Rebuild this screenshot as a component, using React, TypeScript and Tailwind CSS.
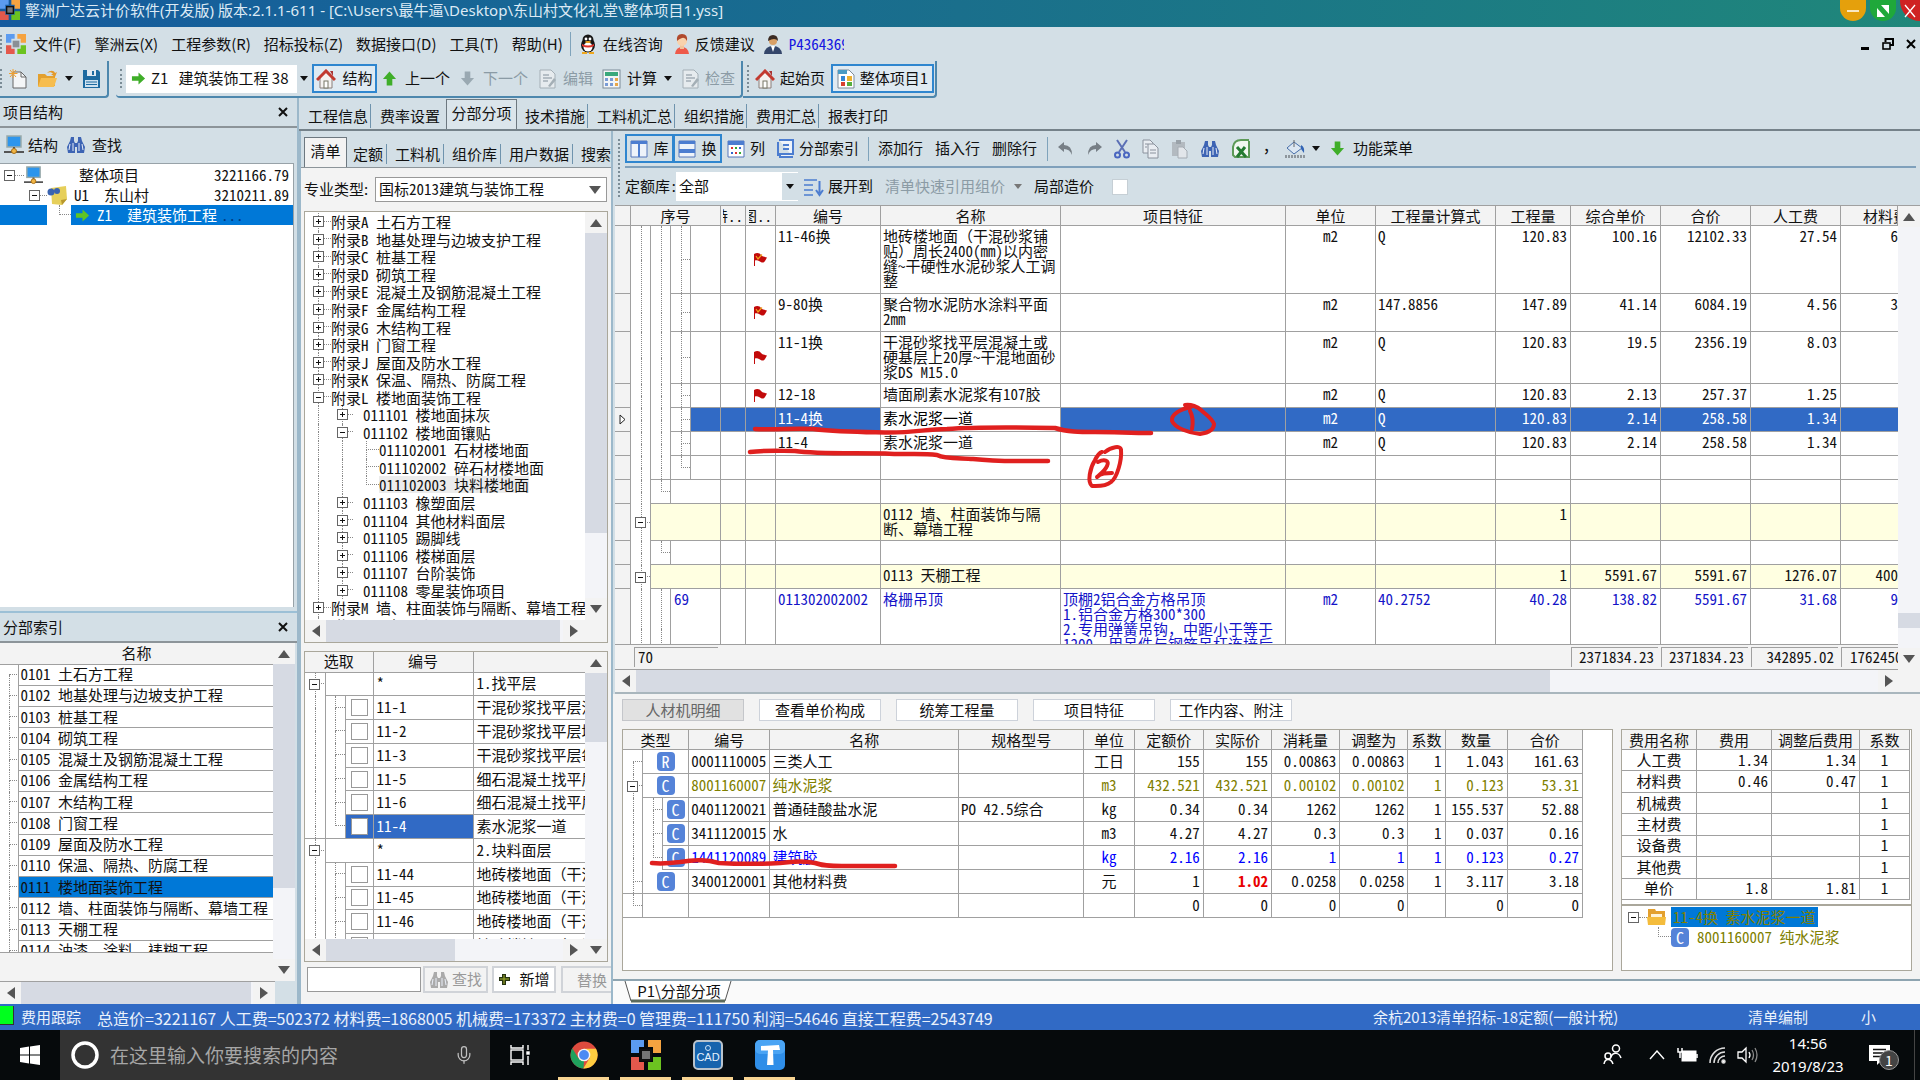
import type { ReactNode } from 'react';
import clsx from 'clsx';
import { Mic } from 'lucide-react';

type Dir = 'up' | 'down' | 'left' | 'right';
type Guide = 'v' | 't' | 'l' | 'first' | 'plus' | 'minus' | 'none';

const UI = "[font-family:'Noto_Sans_CJK_SC',sans-serif]";
const GRID_TEXT = "[font-family:'Noto_Sans_CJK_SC',sans-serif] [font-feature-settings:'hwid']";

const TRIANGLES: Record<Dir, string> = {
  up: '0,9 6,1 12,9',
  down: '0,1 6,9 12,1',
  left: '9,0 1,6 9,12',
  right: '1,0 9,6 1,12',
};

function Triangle({ dir }: { dir: Dir }) {
  const flat = dir === 'up' || dir === 'down';
  return (
    <svg width={flat ? 12 : 10} height={flat ? 10 : 12} className="shrink-0">
      <polygon points={TRIANGLES[dir]} fill="#555" />
    </svg>
  );
}

function Caret({ color = '#111' }: { color?: string }) {
  return (
    <svg width="8" height="5" className="shrink-0">
      <polygon points="0,0 8,0 4,5" fill={color} />
    </svg>
  );
}

function Grip() {
  return <span className="w-0 self-stretch my-2 border-l-2 border-dotted border-[#7b8c96] shrink-0" />;
}

function Sep() {
  return <span className="block w-px h-6 bg-[#7fa3bb] shrink-0" />;
}

/* half-width latin is on in the grids, full-width punctuation has to keep its own width */
function Mixed({ text }: { text: string }) {
  return (
    <>
      {text.split(/([（），、]+)/).map((part, i) =>
        i % 2 ? <span key={i} className="[font-feature-settings:normal]">{part}</span> : part,
      )}
    </>
  );
}

function VScroll({ before, thumb }: { before: string; thumb: string }) {
  return (
    <div className="w-[22px] shrink-0 flex flex-col items-center bg-[#f3f4f8]">
      <div className="w-full h-[21px] flex items-center justify-center bg-[#f3f3f3]"><Triangle dir="up" /></div>
      <div className={before} />
      <div className={clsx('w-full bg-[#d6dae3]', thumb)} />
      <div className="flex-1" />
      <div className="w-full h-[22px] flex items-center justify-center bg-[#f3f3f3]"><Triangle dir="down" /></div>
    </div>
  );
}

function HScroll({ thumb }: { thumb: string }) {
  return (
    <div className="h-[22px] shrink-0 flex items-center bg-[#f3f4f8]">
      <div className="w-[21px] h-full flex items-center justify-center bg-[#f3f3f3]"><Triangle dir="left" /></div>
      <div className="flex-1 h-full"><div className={clsx('h-full bg-[#d6dae3]', thumb)} /></div>
      <div className="w-[22px] h-full flex items-center justify-center bg-[#f3f3f3]"><Triangle dir="right" /></div>
    </div>
  );
}

function Expander({ open }: { open: boolean }) {
  return (
    <svg width="11" height="11" viewBox="0 0 11 11" className="shrink-0">
      <rect x=".5" y=".5" width="10" height="10" fill="#fff" stroke="#666" />
      <path d={open ? 'M3 5.5H8' : 'M3 5.5H8M5.5 3V8'} stroke="#111" />
    </svg>
  );
}

/* one column of the dotted tree lines, stretches to the height of its row */
function TreeGuide({ kind, className }: { kind: Guide; className?: string }) {
  const hasTop = kind !== 'first' && kind !== 'none';
  const hasBottom = kind !== 'l' && kind !== 'none';
  const hasStub = kind !== 'v' && kind !== 'none';
  return (
    <div className={clsx('relative flex self-stretch shrink-0', className)}>
      <div className="w-1/2" />
      <div className="w-1/2 flex flex-col">
        <div className={clsx('h-1/2 border-dotted border-[#888]', hasTop && 'border-l', hasStub && 'border-b')} />
        <div className={clsx('h-1/2 border-dotted border-[#888]', hasBottom && 'border-l')} />
      </div>
      {(kind === 'plus' || kind === 'minus') && (
        <div className="absolute inset-0 flex items-center justify-center"><Expander open={kind === 'minus'} /></div>
      )}
    </div>
  );
}

/* ---------- icons ---------- */

function AppLogo({ size, dark }: { size: number; dark?: boolean }) {
  return (
    <svg width={size} height={size} viewBox="0 0 30 30" className="shrink-0">
      <path d="M0 0H13V7H8V13H0Z" fill="#5b9bf0" />
      <path d="M17 0H30V13H22V7H17Z" fill="#f5a340" />
      <path d="M0 17H8V22H13V30H0Z" fill="#e4584c" />
      <path d="M22 17H30V30H17V22H22Z" fill="#6cc320" />
      <rect x="10" y="10" width="10" height="10" fill={dark ? '#777' : '#8a8f95'} stroke={dark ? '#111' : 'none'} strokeWidth="2" />
    </svg>
  );
}

function HomeIcon() {
  return (
    <svg width="20" height="20" viewBox="0 0 20 20" className="shrink-0">
      <path d="M4 9V19H16V9L10 3Z" fill="#f4f2f0" stroke="#8a7f7a" />
      <path d="M14 2H17V7" fill="#a33" />
      <path d="M1 11L10 2L19 11" fill="none" stroke="#c23a30" strokeWidth="3" />
      <rect x="8" y="12" width="4" height="7" fill="#fff" stroke="#776" />
    </svg>
  );
}

function BlockArrow({ dir, color }: { dir: 'up' | 'down' | 'right'; color: string }) {
  const d = {
    up: 'M8 1L15 9H11V16H5V9H1Z',
    down: 'M8 16L15 8H11V1H5V8H1Z',
    right: 'M15 8.5L8 2V6H1V11H8V15Z',
  }[dir];
  return (
    <svg width="15" height="17" viewBox="0 0 16 17" className="shrink-0"><path d={d} fill={color} /></svg>
  );
}

function Binoculars({ color = '#3d64b4' }: { color?: string }) {
  return (
    <svg width="20" height="20" viewBox="0 0 20 20" className="shrink-0">
      <path d="M5 2H8V6L9 8V18H2L1 12L4 6Z M12 2H15L16 6L19 12L18 18H11V8L12 6Z" fill={color} />
      <rect x="8" y="8" width="4" height="4" fill={color} />
      <path d="M4 9L3 15M7 8V16M13 8V16M16 9L17 15" stroke="#e9eef8" strokeWidth="1" />
    </svg>
  );
}

function NetworkPc({ size = 20 }: { size?: number }) {
  return (
    <svg width={size} height={size} viewBox="0 0 20 20" className="shrink-0">
      <rect x="3" y="1" width="14" height="11" fill="#2d95ec" stroke="#9aa" strokeWidth="1.5" />
      <path d="M10 12V16M0 17H20" stroke="#555" strokeWidth="2" />
      <circle cx="10" cy="16" r="2.5" fill="#f0b545" stroke="#a76d13" />
    </svg>
  );
}

function DocIcon({ accent = '#a4afb6' }: { accent?: string }) {
  return (
    <svg width="18" height="20" viewBox="0 0 18 20" className="shrink-0">
      <path d="M1 1H12L16 5V19H1Z" fill="#e6ebee" stroke={accent} />
      <path d="M4 6H10M4 9H13M4 12H9" stroke={accent} strokeWidth="1.4" />
      <path d="M9 17L15 9L17 11L11 18Z" fill={accent} />
    </svg>
  );
}

function Calculator() {
  return (
    <svg width="19" height="20" viewBox="0 0 19 20" className="shrink-0">
      <rect x="1" y="1" width="17" height="18" fill="#f3f5f7" stroke="#7d8b98" />
      <rect x="3" y="3" width="13" height="4" fill="#3aa87c" />
      <path d="M3 9H6V12H3ZM8 9H11V12H8ZM3 14H6V17H3ZM8 14H11V17H8Z" fill="#7a9cd6" />
      <path d="M13 9H16V12H13ZM13 14H16V17H13Z" fill="#e8a648" />
    </svg>
  );
}

function FlagIcon({ star }: { star?: boolean }) {
  return (
    <svg width="15" height="15" viewBox="0 0 15 15" className="block ml-[7px]">
      <path d="M1 2C4 0 7 1 8 3C10 5 12 5 14 5.500L12 9C10 12 8 10 6 9C5 8 3 8 2 8.500V14H1Z" fill="#c20a0a" />
      {star && <path d="M3 4L5 7L9 2.500" stroke="#f0a81e" strokeWidth="1.2" fill="none" />}
    </svg>
  );
}

function KindBadge({ letter }: { letter: string }) {
  return (
    <span className="w-[18px] h-[19px] rounded-sm bg-[#5583d8] text-white text-[16px] leading-[18px] text-center shrink-0">
      {letter}
    </span>
  );
}

function FolderIcon() {
  return (
    <svg width="20" height="18" viewBox="0 0 20 18" className="shrink-0">
      <path d="M1 4H8L10 6H18V16H1Z" fill="#e3a02e" />
      <path d="M4 8H20L17 17H1Z" fill="#f6bd4f" />
      <path d="M10 3C13 0 17 0 18 3L20 2L18 7L14 4L16 4C15 2 12 2 10 3Z" fill="#e39a2b" />
    </svg>
  );
}

/* ---------- window top ---------- */

function TitleBar() {
  return (
    <header className="h-[27px] shrink-0 flex items-start bg-gradient-to-r from-[#165b9e] via-[#1a6f8c] to-[#20877a] text-[#dceaf5]">
      <AppLogo size={20} dark />
      <h1 className="ml-[5px] flex-1 text-[15px] leading-5 whitespace-pre [font-family:'Noto_Sans','Noto_Sans_CJK_SC',sans-serif]">
        擎洲广达云计价软件(开发版) 版本:2.1.1-611 - [C:\Users\最牛逼\Desktop\东山村文化礼堂\整体项目1.yss]
      </h1>
      <div className="flex gap-1">
        <button aria-label="最小化" className="w-[26px] h-[21px] rounded-b-full bg-[#e5a00c] flex items-center justify-center">
          <svg width="14" height="14"><path d="M1 7H13" stroke="#fff" strokeWidth="1.5" /></svg>
        </button>
        <button aria-label="还原" className="w-[26px] h-[21px] rounded-b-full bg-[#1fa83a] flex items-center justify-center">
          <svg width="14" height="14"><path d="M5 1H13V10ZM1 4V13H9Z" fill="#fff" /></svg>
        </button>
        <button aria-label="关闭" className="w-[20px] h-[21px] rounded-bl-full bg-[#cf2222] flex items-center justify-center">
          <svg width="14" height="14"><path d="M2 1L12 13M12 1L2 13" stroke="#fff" strokeWidth="1.3" /></svg>
        </button>
      </div>
    </header>
  );
}

const MENUS = ['文件(F)', '擎洲云(X)', '工程参数(R)', '招标投标(Z)', '数据接口(D)', '工具(T)', '帮助(H)'];

function MenuBar() {
  return (
    <nav className="h-[34px] shrink-0 flex items-center text-[15px]">
      <Grip />
      <span className="ml-1 mr-[7px]"><AppLogo size={20} /></span>
      <div className="flex gap-[13px]">
        {MENUS.map(m => <button key={m} className="whitespace-nowrap">{m}</button>)}
      </div>
      <span className="ml-[7px] mr-2"><Sep /></span>
      <button className="flex items-center gap-[6px]">
        <svg width="18" height="20" viewBox="0 0 18 20">
          <ellipse cx="9" cy="11" rx="7" ry="7.5" fill="#161616" />
          <circle cx="9" cy="6" r="5.5" fill="#161616" />
          <ellipse cx="9" cy="13" rx="4.5" ry="4.5" fill="#fff" />
          <path d="M3 10Q9 13 15 10L15 12Q9 15 3 12Z" fill="#e03127" />
          <circle cx="7" cy="5" r="1.4" fill="#fff" /><circle cx="11" cy="5" r="1.4" fill="#fff" />
          <ellipse cx="9" cy="8" rx="3" ry="1" fill="#f0a81e" />
          <path d="M3 18H8V20H3ZM10 18H15V20H10Z" fill="#f0a81e" />
        </svg>
        在线咨询
      </button>
      <button className="flex items-center gap-[6px] ml-3">
        <svg width="14" height="20" viewBox="0 0 14 20">
          <path d="M0 20Q1 13 7 13T14 20Z" fill="#ee5a4a" />
          <rect x="5" y="10" width="4" height="5" fill="#f2c39a" />
          <circle cx="7" cy="7" r="5" fill="#f8d2ac" />
          <path d="M2 7Q1 0 7 0T12 7Q10 3 7 4T2 7Z" fill="#b0492c" />
        </svg>
        反馈建议
      </button>
      <button className="flex items-center gap-[7px] ml-[9px]">
        <svg width="18" height="20" viewBox="0 0 18 20">
          <path d="M0 20Q1 12 9 12T18 20Z" fill="#34466a" />
          <path d="M7 12L9 18L11 12Z" fill="#fff" />
          <circle cx="9" cy="7" r="4" fill="#d9a066" />
          <path d="M4 7Q4 1 9 1T14 7Q11 3 4 7Z" fill="#3b2b23" />
        </svg>
        <span className="w-[55px] overflow-hidden text-[#1414e0] [font-feature-settings:'hwid']">P4364369</span>
      </button>
      <div className="ml-auto mr-1 flex items-center gap-3">
        <button aria-label="最小化窗口"><svg width="9" height="12"><path d="M0 10.5H8" stroke="#000" strokeWidth="3" /></svg></button>
        <button aria-label="还原窗口">
          <svg width="12" height="12"><path d="M3.5 4V1H11V7H8" fill="none" stroke="#000" strokeWidth="2" /><rect x="1" y="5" width="7" height="6" fill="none" stroke="#000" strokeWidth="1.6" /></svg>
        </button>
        <button aria-label="关闭窗口"><svg width="10" height="12"><path d="M1 2L9 10M9 2L1 10" stroke="#000" strokeWidth="2" /></svg></button>
      </div>
    </nav>
  );
}

function MainToolbar() {
  return (
    <div className="h-[37px] shrink-0 flex text-[15px]">
      <div className="flex items-center w-[109px] border-b-2 border-r-2 border-[#4d87ad] rounded-br-sm">
        <Grip />
        <button aria-label="新建" className="ml-[7px]">
          <svg width="18" height="20" viewBox="0 0 18 20">
            <path d="M4 3H12L17 8V19H4Z" fill="#f4f6f7" stroke="#666" />
            <path d="M12 3V8H17" fill="none" stroke="#666" />
            <path d="M4 0V9M0 4.500H8.500M1 1L7 8M7 1L1 8" stroke="#f0a030" />
          </svg>
        </button>
        <button aria-label="打开" className="ml-[10px]"><FolderIcon /></button>
        <span className="ml-2 mr-[9px]"><Caret /></span>
        <button aria-label="保存">
          <svg width="19" height="20" viewBox="0 0 19 20">
            <path d="M1 1H16L18 3V19H1Z" fill="#1d6aa0" />
            <rect x="5" y="1" width="9" height="6" fill="#dfe9f2" /><rect x="10" y="2" width="2" height="4" fill="#1d6aa0" />
            <rect x="3" y="11" width="13" height="7" fill="#cfe2f0" /><path d="M4 13H15M4 15.500H15" stroke="#1d6aa0" />
          </svg>
        </button>
      </div>
      <div className="flex items-center pl-1 ml-[7px] w-[627px] border-b-2 border-r-2 border-[#4d87ad] rounded-b-sm">
        <Grip />
        <div className="ml-1 h-[28px] w-[185px] bg-white flex items-center shrink-0">
          <span className="ml-[5px] mr-[5px]"><BlockArrow dir="right" color="#3fae29" /></span>
          <span className="flex-1 whitespace-pre overflow-hidden">Z1   建筑装饰工程 38</span>
          <button aria-label="选择工程" className="w-[14px] h-full bg-[#d3dfe6] flex items-center justify-center"><Caret /></button>
        </div>
        <button className="ml-px h-[29px] w-[65px] shrink-0 border-2 border-[#2f86cf] bg-[#dfeaf2] flex items-center justify-center gap-[6px]">
          <HomeIcon />结构
        </button>
        <button className="ml-[5px] flex items-center gap-2 shrink-0"><BlockArrow dir="up" color="#3fae29" />上一个</button>
        <button disabled className="ml-[10px] flex items-center gap-2 shrink-0 text-[#8b9ba5]"><BlockArrow dir="down" color="#9aa9b2" />下一个</button>
        <button disabled className="ml-[11px] flex items-center gap-[6px] shrink-0 text-[#8b9ba5]"><DocIcon />编辑</button>
        <button className="ml-[9px] flex items-center gap-[6px] shrink-0"><Calculator />计算</button>
        <span className="ml-[7px] mr-[10px]"><Caret /></span>
        <button disabled className="flex items-center gap-[5px] shrink-0 text-[#8b9ba5]"><DocIcon />检查</button>
      </div>
      <div className="flex items-center w-[194px] border-b-2 border-r-2 border-[#4d87ad] rounded-br-sm">
        <span className="w-0 self-stretch my-1 ml-1 border-l-2 border-dotted border-[#7b8c96]" />
        <a href="#start" className="ml-[6px] flex items-center gap-[5px]"><HomeIcon />起始页</a>
        <a href="#project" className="ml-[6px] h-[29px] w-[103px] flex items-center justify-center gap-[5px] border-2 border-[#2f86cf] bg-[#dfeaf2]">
          <svg width="18" height="20" viewBox="0 0 18 20">
            <path d="M1 1H12L17 6V19H1Z" fill="#fff" stroke="#7d8b98" />
            <rect x="1" y="1" width="9" height="4" fill="#4a9bc4" />
            <rect x="4" y="7" width="4" height="5" fill="#3587d4" /><rect x="10" y="7" width="5" height="5" fill="#eeb12f" />
            <rect x="4" y="13" width="4" height="4" fill="#d8402f" /><rect x="10" y="13" width="5" height="4" fill="#55ae3d" />
          </svg>
          整体项目1
        </a>
      </div>
    </div>
  );
}

/* ---------- left side ---------- */

function PanelHeader({ title }: { title: string }) {
  return (
    <div className="h-[30px] shrink-0 flex items-center justify-between pl-[3px] pr-2 border-b-2 border-[#8c9499] text-[15px]">
      <h2>{title}</h2>
      <button aria-label={`关闭${title}`}>
        <svg width="12" height="12"><path d="M2 2L10 10M10 2L2 10" stroke="#111" strokeWidth="2" /></svg>
      </button>
    </div>
  );
}

function ProjectPanel() {
  return (
    <section className="flex-1 min-h-0 flex flex-col">
      <PanelHeader title="项目结构" />
      <div className="h-[35px] shrink-0 flex items-center pl-1 pb-px text-[15px]">
        <button className="flex items-center gap-1"><NetworkPc />结构</button>
        <button className="ml-2 flex items-center gap-[6px]"><Binoculars />查找</button>
      </div>
      <ul className={clsx('flex-1 bg-white border-t border-r border-[#98a2a8] pt-px mr-[3px] text-[15px] leading-5', GRID_TEXT)}>
        <li className="h-5 flex items-center pr-1">
          <TreeGuide kind="none" className="w-[4px]" />
          <Expander open />
          <span className="w-[9px] border-t border-dotted border-[#888]" />
          <NetworkPc size={19} />
          <span className="ml-9 flex-1">整体项目</span>
          <span>3221166.79</span>
        </li>
        <li className="h-5 flex items-center pr-1">
          <TreeGuide kind="none" className="w-[29px]" />
          <Expander open />
          <span className="w-[7px] border-t border-dotted border-[#888]" />
          <svg width="20" height="19" viewBox="0 0 20 19">
            <path d="M4 2L19 0L20 13L15 19L5 18Z" fill="#e6cf5a" />
            <path d="M15 19L14 14L20 13Z" fill="#b8982e" />
            <circle cx="4" cy="6" r="3.500" fill="#3a63b0" /><circle cx="10" cy="5" r="3" fill="#3a63b0" />
          </svg>
          <span className="ml-[7px] flex-1 whitespace-pre">U1  东山村</span>
          <span>3210211.89</span>
        </li>
        <li className="h-5 flex items-center text-white">
          <span className="w-[47px] h-full bg-[#0078d7]" />
          <TreeGuide kind="l" className="w-[24px]" />
          <span className="flex-1 h-full bg-[#0078d7] flex items-center pl-1">
            <BlockArrow dir="right" color="#5fc423" />
            <span className="ml-[7px] whitespace-pre">Z1  建筑装饰工程</span>
            <span className="text-[#003a80] ml-1">...</span>
          </span>
        </li>
      </ul>
    </section>
  );
}

const SECTIONS = [
  '0101 土石方工程', '0102 地基处理与边坡支护工程', '0103 桩基工程', '0104 砌筑工程', '0105 混凝土及钢筋混凝土工程',
  '0106 金属结构工程', '0107 木结构工程', '0108 门窗工程', '0109 屋面及防水工程', '0110 保温、隔热、防腐工程',
  '0111 楼地面装饰工程', '0112 墙、柱面装饰与隔断、幕墙工程', '0113 天棚工程', '0114 油漆、涂料、裱糊工程',
];

function SectionIndex() {
  return (
    <section className="h-[393px] shrink-0 flex flex-col border-t-2 border-[#9cc0d6] bg-[#d3dfe6]">
      <PanelHeader title="分部索引" />
      <div className="flex-1 min-h-0 flex bg-[#f3f3f3] mr-[2px]">
        <div className="flex-1 overflow-hidden h-[310px] border-b border-[#a0a0a0]">
          <table className={clsx('w-full h-[319px] text-[15px] leading-[15px] whitespace-nowrap border-collapse', GRID_TEXT)}>
            <thead>
              <tr><th colSpan={2} className="h-[21px] pb-[2px] font-normal border-b border-[#a0a0a0]">名称</th></tr>
            </thead>
            <tbody>
              {SECTIONS.map((s, i) => (
                <tr key={s}>
                  <td className="w-[18px] h-px p-0 bg-white border-r border-[#a0a0a0]">
                    <div className="h-full flex"><TreeGuide kind={i === 0 ? 'first' : 't'} className="w-[17px]" /></div>
                  </td>
                  <td className={clsx('h-px p-0 pl-[2px] pb-[2px] border-b border-[#a0a0a0]', i === 10 ? 'bg-[#0078d7]' : 'bg-white')}>
                    <Mixed text={s} />
                  </td>
                </tr>
              ))}
            </tbody>
          </table>
        </div>
        <VScroll before="h-0" thumb="h-[224px]" />
      </div>
      <div className="border-t border-[#a0a0a0] mr-[22px]"><HScroll thumb="w-[230px]" /></div>
    </section>
  );
}

/* ---------- middle column ---------- */

interface TreeItem { code: string; guides: Guide[]; active?: boolean }

const CATALOG: TreeItem[] = [
  ...['A 土石方工程', 'B 地基处理与边坡支护工程', 'C 桩基工程', 'D 砌筑工程', 'E 混凝土及钢筋混凝土工程', 'F 金属结构工程',
    'G 木结构工程', 'H 门窗工程', 'J 屋面及防水工程', 'K 保温、隔热、防腐工程'].map(t => ({ code: `附录${t}`, guides: ['plus'] as Guide[] })),
  { code: '附录L 楼地面装饰工程', guides: ['minus'] },
  { code: '011101 楼地面抹灰', guides: ['v', 'plus'] },
  { code: '011102 楼地面镶贴', guides: ['v', 'minus'] },
  { code: '011102001 石材楼地面', guides: ['v', 'v', 't'] },
  { code: '011102002 碎石材楼地面', guides: ['v', 'v', 't'] },
  { code: '011102003 块料楼地面', guides: ['v', 'v', 'l'], active: true },
  ...['3 橡塑面层', '4 其他材料面层', '5 踢脚线', '6 楼梯面层', '7 台阶装饰', '8 零星装饰项目'].map(t => ({
    code: `01110${t}`, guides: ['v', 'plus'] as Guide[],
  })),
  { code: '附录M 墙、柱面装饰与隔断、幕墙工程', guides: ['plus'] },
  { code: '附录N 天棚工程', guides: ['plus'] },
];

function CatalogTree() {
  return (
    <div className="flex-1 min-h-0 flex flex-col border border-[#aaa79b] mx-[3px]">
      <div className="flex-1 min-h-0 flex">
        <div className="flex-1 overflow-hidden bg-white pt-px">
          <ul className={clsx('h-[421px] flex flex-col text-[15px] leading-[17px] whitespace-nowrap', GRID_TEXT)}>
            {CATALOG.map(item => (
              <li key={item.code} className="flex-1 flex items-center">
                {item.guides.map((g, i) => <TreeGuide key={i} kind={g} className={i === 1 ? 'w-[22px]' : 'w-[26px]'} />)}
                <span className={clsx(item.guides.length === 2 && 'ml-[10px]', item.active && 'bg-[#ececec]')}>
                  <Mixed text={item.code} />
                </span>
              </li>
            ))}
          </ul>
        </div>
        <VScroll before="h-0" thumb="h-[300px]" />
      </div>
      <div className="bg-[#f3f3f3] pr-[22px]"><HScroll thumb="w-[234px]" /></div>
    </div>
  );
}

const QUOTAS: [string, string][] = [
  ['*', '1.找平层'], ['11-1', '干混砂浆找平层混凝土'], ['11-2', '干混砂浆找平层填充'], ['11-3', '干混砂浆找平层每增'],
  ['11-5', '细石混凝土找平层'], ['11-6', '细石混凝土找平层'], ['11-4', '素水泥浆一道'], ['*', '2.块料面层'],
  ['11-44', '地砖楼地面（干混砂浆'], ['11-45', '地砖楼地面（干混砂浆'], ['11-46', '地砖楼地面（干混砂浆'], ['11-47', '地砖楼地面（干混砂浆'],
];

function QuotaList() {
  return (
    <div className="mx-[3px] h-[311px] shrink-0 flex border border-[#aaa79b]">
      <div className="flex-1 min-w-0 flex flex-col">
        <div className="flex-1 min-h-0 overflow-hidden">
          <table className={clsx('table-fixed w-full h-[306px] text-[15px] leading-[15px] whitespace-nowrap border-collapse', GRID_TEXT)}>
            <colgroup>
              <col className="w-[20px]" /><col className="w-[20px]" /><col className="w-[28px]" /><col className="w-[100px]" /><col />
            </colgroup>
            <thead>
              <tr className="border-b border-[#a0a0a0] bg-[#f3f3f3] [&>th]:pb-[2px]">
                <th colSpan={3} className="h-[20px] font-normal border-r border-[#a0a0a0]">选取</th>
                <th className="font-normal border-r border-[#a0a0a0]">编号</th>
                <th><span className="sr-only">名称</span></th>
              </tr>
            </thead>
            <tbody className="bg-white">
              {QUOTAS.map(([code, name], i) => {
                const group = code === '*';
                const last = i === 6;
                return (
                  <tr key={i}>
                    <td className={clsx('h-px p-0 border-r border-[#a0a0a0]', last && 'border-b')}>
                      <div className="h-full flex"><TreeGuide kind={group ? 'minus' : 'v'} className="w-[19px]" /></div>
                    </td>
                    {group ? <td colSpan={2} className="p-0 border-b border-r border-[#a0a0a0]" /> : (
                      <>
                        <td className={clsx('h-px p-0 border-r border-[#a0a0a0]', last && 'border-b')}>
                          <div className="h-full flex"><TreeGuide kind={last ? 'l' : 't'} className="w-[19px]" /></div>
                        </td>
                        <td className={clsx('p-0 border-b border-r border-[#a0a0a0]', last && 'bg-[#316ac5]')}>
                          <input type="checkbox" aria-label={`${code} ${name}`} className="appearance-none block mx-auto w-[17px] h-[17px] bg-white border border-[#999]" />
                        </td>
                      </>
                    )}
                    <td className={clsx('p-0 pl-[3px] pb-[2px] border-b border-r border-[#a0a0a0]', last && 'bg-[#316ac5] text-white')}>{code}</td>
                    <td className="p-0 pl-[3px] pb-[2px] border-b border-[#a0a0a0] overflow-hidden"><Mixed text={name} /></td>
                  </tr>
                );
              })}
            </tbody>
          </table>
        </div>
        <HScroll thumb="w-[129px]" />
      </div>
      <VScroll before="h-0" thumb="h-[69px]" />
    </div>
  );
}

function LibraryPanel() {
  return (
    <section className="w-[314px] shrink-0 flex flex-col pb-[3px] border-x-2 border-[#9cb8ca] bg-[#f3f3f3]">
      <div className="h-[37px] shrink-0 flex items-end overflow-hidden bg-[#d3dfe6] border-b border-[#8c9499] text-[15px] whitespace-nowrap pl-[3px]">
        <button className="w-[43px] h-[30px] shrink-0 border border-b-0 border-[#6d7880] bg-[#f3f3f3] pb-1 leading-5">清单</button>
        {['定额', '工料机', '组价库', '用户数据', '搜索'].map((t, i) => (
          <button key={t} className={clsx('shrink-0 pb-[3px]', i ? 'pl-2' : 'pl-[6px]')}>
            <span className={clsx('block pr-[3px] leading-5', i < 4 && 'border-r border-[#6f93ad]')}>{t}</span>
          </button>
        ))}
      </div>
      <label className="h-[43px] shrink-0 flex items-center pl-[3px] text-[15px] whitespace-nowrap">
        <span className="w-[71px]">专业类型:</span>
        <span className="relative">
          <select className="appearance-none block w-[232px] h-[25px] border border-[#999] bg-white pl-[3px] [font-feature-settings:'hwid']">
            <option>国标2013建筑与装饰工程</option>
          </select>
          <span className="absolute right-[6px] inset-y-0 flex items-center pointer-events-none"><Triangle dir="down" /></span>
        </span>
      </label>
      <CatalogTree />
      <div className="h-2 shrink-0" />
      <QuotaList />
      <div className="h-[39px] shrink-0 flex items-center overflow-hidden pl-[6px] pb-1 text-[15px] whitespace-nowrap">
        <input aria-label="查找内容" className="w-[114px] h-[25px] shrink-0 border border-[#999] bg-white" />
        <button disabled className="ml-[2px] w-[65px] h-[27px] shrink-0 border-2 border-[#d0d3d8] flex items-center justify-center gap-[3px] text-[#999]">
          <Binoculars color="#aaa" />查找
        </button>
        <button className="ml-1 w-[64px] h-[27px] shrink-0 border-2 border-[#d0d3d8] bg-white flex items-center justify-center gap-2">
          <svg width="13" height="13"><path d="M4 1H8V4H12V8H8V12H4V8H1V4H4Z" fill="#263311" /><path d="M6 2V11M2 6H11" stroke="#a9b52f" /></svg>
          新增
        </button>
        <button disabled className="ml-[5px] w-[62px] h-[27px] leading-5 shrink-0 border-2 border-[#d0d3d8] text-[#999]">替换</button>
      </div>
    </section>
  );
}

/* ---------- main grid ---------- */

function GridToolbar() {
  return (
    <div className="h-[74px] shrink-0 flex items-stretch pl-[5px] bg-[#d3dfe6] text-[15px] whitespace-nowrap">
      <Grip />
      <div className="flex-1 ml-[5px]">
        <div className="h-[37px] flex items-center border-b-2 border-[#7fa0bb] mr-1">
          <button className="h-[29px] w-[49px] border-2 border-[#2f86cf] flex items-center justify-center gap-[5px]">
            <svg width="18" height="18"><path d="M1 1H17V17H1Z" fill="#eef3fa" stroke="#5577bb" /><path d="M1 1H17V4H1ZM8 1H10V17H8Z" fill="#4c7dd0" /></svg>库
          </button>
          <button className="h-[29px] w-[49px] -ml-px border-2 border-[#2f86cf] flex items-center justify-center gap-[5px]">
            <svg width="18" height="18"><path d="M1 1H17V17H1Z" fill="#eef3fa" stroke="#5577bb" /><path d="M1 1H17V4H1ZM1 9H17V13H1Z" fill="#4c7dd0" /></svg>换
          </button>
          <button className="ml-[5px] flex items-center gap-[5px]">
            <svg width="18" height="18">
              <path d="M1 1H17V17H1Z" fill="#fff" stroke="#5577bb" /><path d="M1 1H17V5H1Z" fill="#4c7dd0" />
              <path d="M4 7H6V9H4ZM8 12H10V14H8Z" fill="#d33" /><path d="M8 7H10V9H8ZM12 12H14V14H12Z" fill="#3a3" /><path d="M12 7H14V9H12ZM4 12H6V14H4Z" fill="#36c" />
            </svg>列
          </button>
          <button className="ml-[11px] flex items-center gap-[5px]">
            <svg width="18" height="20"><path d="M3 1H17V15H4V18H17" fill="#eef3fa" stroke="#4c7dd0" strokeWidth="2" /><path d="M2 3V17M7 6H13M7 10H13" stroke="#4c7dd0" strokeWidth="2" /></svg>分部索引
          </button>
          <span className="mx-[9px]"><Sep /></span>
          <div className="flex gap-3"><button>添加行</button><button>插入行</button><button>删除行</button></div>
          <span className="mx-[10px]"><Sep /></span>
          <div className="flex items-center gap-3">
            <button aria-label="撤销"><svg width="16" height="16"><path d="M0 6L6 1V4Q14 4 14 14Q12 8 6 8V11Z" fill="#777f86" /></svg></button>
            <button aria-label="重做"><svg width="16" height="16"><path d="M16 6L10 1V4Q2 4 2 14Q4 8 10 8V11Z" fill="#777f86" /></svg></button>
            <button aria-label="剪切">
              <svg width="16" height="20"><path d="M3 1L11 13M13 1L5 13" stroke="#5b6fb5" strokeWidth="2" /><circle cx="3.500" cy="16" r="2.500" fill="none" stroke="#4a66c0" strokeWidth="2" /><circle cx="12.500" cy="16" r="2.500" fill="none" stroke="#4a66c0" strokeWidth="2" /></svg>
            </button>
            <button aria-label="复制">
              <svg width="17" height="20"><path d="M1 1H8L11 4V14H1Z" fill="#e9edf2" stroke="#8a919c" /><path d="M6 5H12L16 9V19H6Z" fill="#e9edf2" stroke="#8a919c" /><path d="M8 11H14M8 14H14M3 5H6M3 8H5" stroke="#8a919c" /></svg>
            </button>
            <button aria-label="粘贴">
              <svg width="17" height="20"><path d="M1 3H14V17H1Z" fill="#b3bac0" /><path d="M5 1H10V5H5Z" fill="#9aa2a9" /><path d="M7 8H12L16 12V19H7Z" fill="#e2e6ea" stroke="#a5acb3" /></svg>
            </button>
            <button aria-label="查找"><Binoculars /></button>
            <button aria-label="导出表格">
              <svg width="18" height="20"><path d="M17 2V18H3L1 16V8Q2 1 9 1H17" fill="#f2f7f1" stroke="#5d9a58" strokeWidth="2" /><path d="M5 8L14 18M13 8L5 18" stroke="#257b32" strokeWidth="3" /></svg>
            </button>
          </div>
          <span className="ml-[14px] mr-[15px] -mt-3 text-[18px] leading-5">,</span>
          <button aria-label="填充颜色">
            <svg width="22" height="20"><path d="M3 9L10 3L18 9L10 15Z" fill="#dce7f2" stroke="#456da8" /><path d="M10 1V8" stroke="#666" /><path d="M17 6Q21 8 20 14L17 10Z" fill="#3164b5" /><path d="M1 17.500H21" stroke="#8e969c" strokeWidth="3" strokeDasharray="2 1" /></svg>
          </button>
          <span className="ml-[6px] mr-[10px]"><Caret /></span>
          <button className="flex items-center gap-2"><BlockArrow dir="down" color="#3fae29" />功能菜单</button>
        </div>
        <div className="h-[37px] flex items-center">
          <label htmlFor="quota-lib" className="w-[51px] [font-feature-settings:'hwid']">定额库:</label>
          <span className="relative">
            <select id="quota-lib" className="appearance-none block w-[122px] h-[29px] pl-px bg-white border-2 border-white"><option>全部</option></select>
            <span className="absolute right-0 inset-y-px w-4 flex items-center justify-center bg-[#d3dfe6] pointer-events-none"><Caret /></span>
          </span>
          <button className="ml-[6px] flex items-center gap-1">
            <svg width="20" height="20"><path d="M0 3H13M0 8H9M0 13H9M0 18H9" stroke="#4c7dd0" strokeWidth="1.6" /><path d="M15.500 4V16M12 13L15.500 18L19 13" fill="none" stroke="#4c7dd0" strokeWidth="2" /></svg>
            展开到
          </button>
          <button disabled className="ml-3 flex items-center gap-[9px] text-[#8b9ba5]">清单快速引用组价 <Caret color="#777" /></button>
          <label htmlFor="partial" className="ml-3">局部造价</label>
          <input id="partial" type="checkbox" className="appearance-none ml-[18px] w-4 h-4 bg-white border border-[#c6cfd5]" />
        </div>
      </div>
    </div>
  );
}

interface GridRow {
  h: string;
  guides: Guide[];
  from: number; // first guide column that carries the bottom rule
  no?: string;
  flag?: 'plain' | 'star';
  tone?: 'section' | 'blue' | 'selected';
  cells: string[];
}

const tri: Guide[] = ['v', 'v', 't'];
const EMPTY = ['', '', '', '', '', '', '', '', '', ''];

const GRID_ROWS: GridRow[] = [
  { h: 'h-[68px]', guides: tri, from: 2, flag: 'star', cells: ['11-46换', '地砖楼地面（干混砂浆铺贴）周长2400(mm)以内密缝~干硬性水泥砂浆人工调整', '', 'm2', 'Q', '120.83', '100.16', '12102.33', '27.54', '6'] },
  { h: 'h-[38px]', guides: tri, from: 2, flag: 'star', cells: ['9-80换', '聚合物水泥防水涂料平面2mm', '', 'm2', '147.8856', '147.89', '41.14', '6084.19', '4.56', '3'] },
  { h: 'h-[52px]', guides: tri, from: 2, flag: 'plain', cells: ['11-1换', '干混砂浆找平层混凝土或硬基层上20厚~干混地面砂浆DS M15.0', '', 'm2', 'Q', '120.83', '19.5', '2356.19', '8.03', ''] },
  { h: 'h-[24px]', guides: tri, from: 2, flag: 'plain', cells: ['12-18', '墙面刷素水泥浆有107胶', '', 'm2', 'Q', '120.83', '2.13', '257.37', '1.25', ''] },
  { h: 'h-[24px]', guides: tri, from: 2, tone: 'selected', cells: ['11-4换', '素水泥浆一道', '', 'm2', 'Q', '120.83', '2.14', '258.58', '1.34', ''] },
  { h: 'h-[24px]', guides: tri, from: 2, cells: ['11-4', '素水泥浆一道', '', 'm2', 'Q', '120.83', '2.14', '258.58', '1.34', ''] },
  { h: 'h-[24px]', guides: ['v', 'v', 'l'], from: 1, cells: EMPTY },
  { h: 'h-[24px]', guides: ['v', 'l'], from: 1, cells: EMPTY },
  { h: 'h-[37px]', guides: ['minus'], from: 1, tone: 'section', cells: ['', '0112 墙、柱面装饰与隔断、幕墙工程', '', '', '', '1', '', '', '', ''] },
  { h: 'h-[24px]', guides: ['v', 'l'], from: 1, cells: EMPTY },
  { h: 'h-[24px]', guides: ['minus'], from: 1, tone: 'section', cells: ['', '0113 天棚工程', '', '', '', '1', '5591.67', '5591.67', '1276.07', '400'] },
  { h: 'h-[80px]', guides: ['v', 'v'], from: 3, no: '69', tone: 'blue', cells: ['011302002002', '格栅吊顶', '顶棚2铝合金方格吊顶\n1.铝合金方格300*300\n2.专用弹簧吊钩，中距小于等于\n1200，用吊件与钢筋吊杆连接后', 'm2', '40.2752', '40.28', '138.82', '5591.67', '31.68', '9'] },
];

const GRID_HEAD = ['编号', '名称', '项目特征', '单位', '工程量计算式', '工程量', '综合单价', '合价', '人工费'];

const cellAlign = (i: number) =>
  clsx(i === 3 && 'text-center', i >= 5 && 'text-right', i >= 5 && i < 9 && 'pr-[3px]', i < 5 && i !== 3 && 'pl-[2px]');

function CostGrid() {
  return (
    <div className="relative flex-1 min-h-0 flex flex-col border-t border-[#a0a0a0] bg-[#f3f3f3] ml-[2px]">
      <div className="flex-1 min-h-0 flex">
        <div className="flex-1 min-w-0 flex flex-col">
          <div className="flex-1 min-h-0 overflow-hidden bg-white">
            <table className={clsx('table-fixed w-full border-separate border-spacing-0 text-[15px] leading-[15px]', GRID_TEXT)}>
              <colgroup>
                <col className="w-[16px]" /><col className="w-[90px]" /><col className="w-[25px]" /><col className="w-[30px]" />
                <col className="w-[105px]" /><col className="w-[180px]" /><col /><col className="w-[90px]" /><col className="w-[120px]" />
                <col className="w-[75px]" /><col className="w-[90px]" /><col className="w-[90px]" /><col className="w-[90px]" /><col className="w-[57px]" />
              </colgroup>
              <thead>
                <tr className="h-[20px] bg-[#f3f3f3] [&>th]:p-0 [&>th]:font-normal [&>th]:border-b [&>th]:border-r [&>th]:border-[#a0a0a0] [&>th]:whitespace-nowrap [&>th]:overflow-hidden">
                  <th />
                  <th>序号</th>
                  <th><span className="flex justify-end ml-[2px] mr-[2px] overflow-hidden">特..</span></th>
                  <th><span className="flex justify-end ml-[3px] mr-[3px] overflow-hidden">图..</span></th>
                  {GRID_HEAD.map(h => <th key={h}>{h}</th>)}
                  <th className="text-left"><span className="pl-[22px]">材料费</span></th>
                </tr>
              </thead>
              <tbody>
                {GRID_ROWS.map((row, r) => {
                  const sel = row.tone === 'selected';
                  const bg = clsx(row.tone === 'section' && 'bg-[#ffffe1]', sel && 'bg-[#316ac5]');
                  return (
                    <tr key={r} className={clsx(row.h, row.tone === 'blue' && 'text-[#1414c8]', sel && 'text-white')}>
                      <td className="p-0 bg-[#f3f3f3] border-b border-r border-[#a0a0a0]">
                        {sel && <svg width="9" height="11" className="mx-auto block"><path d="M2 1L7 5.500L2 10Z" fill="#fff" stroke="#222" /></svg>}
                      </td>
                      <td className="h-px p-0 border-r border-[#a0a0a0]">
                        <div className="h-full flex">
                          {row.guides.map((g, i) => (
                            <div key={i} className={clsx('w-[20px] flex border-r border-[#a0a0a0] shrink-0', i >= row.from && 'border-b')}>
                              <TreeGuide kind={g} className="w-[19px]" />
                            </div>
                          ))}
                          <div className={clsx('flex-1 pl-[3px] pt-[2px] border-b border-[#a0a0a0]', bg)}>{row.no}</div>
                        </div>
                      </td>
                      <td className={clsx('p-0 border-b border-r border-[#a0a0a0]', bg)} />
                      <td className={clsx('p-0 border-b border-r border-[#a0a0a0]', bg)}>{row.flag && <FlagIcon star={row.flag === 'star'} />}</td>
                      {row.cells.map((c, i) => (
                        <td
                          key={i}
                          className={clsx('p-0 pt-[2px] align-top border-b border-[#a0a0a0]', i < 9 && 'border-r', cellAlign(i), i === 2 && 'whitespace-pre overflow-hidden', i === 1 && sel ? 'text-black' : bg)}
                        >
                          <Mixed text={c} />
                        </td>
                      ))}
                    </tr>
                  );
                })}
              </tbody>
            </table>
          </div>
          <div className={clsx('h-[26px] shrink-0 flex items-center border-y border-[#a0a0a0] bg-[#f3f3f3] text-[15px] leading-[18px] pl-[19px]', GRID_TEXT)}>
            <span className="w-[84px] h-5 pl-[3px] border-l border-t border-[#a0a0a0]">70</span>
            <span className="flex-1" />
            {['2371834.23', '2371834.23', '342895.02'].map((v, i) => (
              <span key={i} className="w-[87px] mr-[3px] h-5 pr-1 text-right border-l border-t border-[#a0a0a0]">{v}</span>
            ))}
            <span className="w-[57px] h-5 pl-2 overflow-hidden border-l border-t border-[#a0a0a0]">1762450</span>
          </div>
        </div>
        <VScroll before="h-[386px]" thumb="h-[15px]" />
      </div>
      <div className="border-b-2 border-[#a9b6bd] pr-[20px]"><HScroll thumb="w-[914px]" /></div>

      {/* pen marks over the two 素水泥浆 rows */}
      <svg className="absolute left-0 top-0 pointer-events-none" width="620" height="300" fill="none" stroke="#e0201f" strokeWidth="4.500" strokeLinecap="round" strokeLinejoin="round">
        <path d="M140 223C160 224 180 222 198 223C225 226 245 226 270 226.500C300 227 310 223 332 223C360 221 385 221 440 222C452 226 465 226 480 226C500 226 515 227 536 227" />
        <path d="M135 246C150 244 165 245 180 245C200 248 230 247 270 247.500C290 249 305 247 322 249C330 253 345 252 358 253C385 256 410 255 433 255" />
        <path strokeWidth="4" d="M570 199C576 198 583 201 586 204C590 208 597 212 599 218C599 225 592 227 585 228C574 227 560 222 557 215C556 208 566 203 576 201M575 205Q579 212 577 223" />
        <path strokeWidth="4" d="M490 246C496 241 506 239 506 244C507 254 502 272 496 276C490 281 482 280 477 280C472 276 475 262 480 254C482 250 484 247 487 246M483 256C489 253 495 254 492 260C490 265 484 269 482 271C486 267 491 267 497 267" />
      </svg>
    </div>
  );
}

/* ---------- resource detail ---------- */

interface DetailRow { guides: Guide[]; kind: string; cells: string[]; tone?: string; hot?: boolean }

const DETAIL_HEAD = ['编号', '名称', '规格型号', '单位', '定额价', '实际价', '消耗量', '调整为', '系数', '数量', '合价'];

const DETAILS: DetailRow[] = [
  { guides: ['first'], kind: 'R', cells: ['0001110005', '三类人工', '', '工日', '155', '155', '0.00863', '0.00863', '1', '1.043', '161.63'] },
  { guides: ['minus'], kind: 'C', tone: 'text-[#808000]', cells: ['8001160007', '纯水泥浆', '', 'm3', '432.521', '432.521', '0.00102', '0.00102', '1', '0.123', '53.31'] },
  { guides: ['v', 't'], kind: 'C', cells: ['0401120021', '普通硅酸盐水泥', 'PO 42.5综合', 'kg', '0.34', '0.34', '1262', '1262', '1', '155.537', '52.88'] },
  { guides: ['v', 't'], kind: 'C', cells: ['3411120015', '水', '', 'm3', '4.27', '4.27', '0.3', '0.3', '1', '0.037', '0.16'] },
  { guides: ['v', 'l'], kind: 'C', tone: 'text-[#0000ff]', cells: ['1441120089', '建筑胶', '', 'kg', '2.16', '2.16', '1', '1', '1', '0.123', '0.27'] },
  { guides: ['t'], kind: 'C', hot: true, cells: ['3400120001', '其他材料费', '', '元', '1', '1.02', '0.0258', '0.0258', '1', '3.117', '3.18'] },
  { guides: ['l'], kind: '', cells: ['', '', '', '', '0', '0', '0', '0', '', '0', '0'] },
];

const FEES = [
  ['人工费', '1.34', '1.34', '1'], ['材料费', '0.46', '0.47', '1'], ['机械费', '', '', '1'], ['主材费', '', '', '1'],
  ['设备费', '', '', '1'], ['其他费', '', '', '1'], ['单价', '1.8', '1.81', '1'],
];

function DetailTable() {
  return (
    <div className="relative flex-1 min-w-0 border border-[#aaa79b] bg-white">
      <table className={clsx('table-fixed w-[960px] border-separate border-spacing-0 text-[15px] leading-[15px] whitespace-nowrap', GRID_TEXT)}>
        <colgroup>
          <col className="w-[66px]" /><col className="w-[81px]" /><col className="w-[188px]" /><col className="w-[125px]" /><col className="w-[50px]" />
          <col className="w-[69px]" /><col className="w-[68px]" /><col className="w-[68px]" /><col className="w-[68px]" /><col className="w-[37px]" />
          <col className="w-[62px]" /><col className="w-[75px]" />
        </colgroup>
        <thead>
          <tr className="h-[20px] bg-[#f3f3f3]">
            {['类型', ...DETAIL_HEAD].map(h => <th key={h} className="p-0 pb-px font-normal border-b border-r border-[#a0a0a0]">{h}</th>)}
          </tr>
        </thead>
        <tbody>
          {DETAILS.map((row, r) => (
            <tr key={r} className={clsx('h-[24px]', row.tone)}>
              <td className="h-px p-0 border-r border-[#a0a0a0]">
                <div className="h-full flex">
                  {row.guides.map((g, i) => (
                    <div key={i} className={clsx('w-[20px] flex shrink-0 border-r border-[#a0a0a0]', r > 4 && 'border-b')}>
                      <TreeGuide kind={g} className="w-[19px]" />
                    </div>
                  ))}
                  <div className="flex-1 flex items-center justify-center border-b border-[#a0a0a0]">{row.kind && <KindBadge letter={row.kind} />}</div>
                </div>
              </td>
              {row.cells.map((c, i) => (
                <td
                  key={i}
                  className={clsx('p-0 pb-[2px] border-b border-r border-[#a0a0a0]', i < 3 && 'pl-[2px]', i === 3 && 'text-center', i > 3 && 'text-right pr-[3px]', row.hot && i === 5 && 'text-[#e80000] font-bold')}
                >
                  {c}
                </td>
              ))}
            </tr>
          ))}
        </tbody>
      </table>
      <svg className="absolute left-0 top-0 pointer-events-none" width="300" height="150" fill="none" stroke="#e0201f" strokeWidth="4.500" strokeLinecap="round">
        <path d="M29 133C39 134 49 133 57 132C74 129 84 130 96 133C114 134 139 134 157 133C171 131 184 131 192 133C204 137 214 136 229 136H272" />
      </svg>
    </div>
  );
}

function FeePanel() {
  return (
    <div className="w-[291px] shrink-0 flex flex-col border border-[#aaa79b] bg-white">
      <table className={clsx('table-fixed w-[288px] h-[170px] border-separate border-spacing-0 text-[15px] leading-[15px] whitespace-nowrap', GRID_TEXT)}>
        <colgroup><col className="w-[75px]" /><col className="w-[75px]" /><col className="w-[88px]" /><col className="w-[50px]" /></colgroup>
        <thead>
          <tr className="bg-[#f3f3f3]">
            {['费用名称', '费用', '调整后费用', '系数'].map(h => <th key={h} className="h-[20px] p-0 pb-px font-normal border-b border-r border-[#a0a0a0]">{h}</th>)}
          </tr>
        </thead>
        <tbody>
          {FEES.map(row => (
            <tr key={row[0]}>
              {row.map((c, i) => (
                <td key={i} className={clsx('p-0 pb-[2px] border-b border-r border-[#a0a0a0]', i === 1 || i === 2 ? 'text-right pr-[3px]' : 'text-center')}>{c}</td>
              ))}
            </tr>
          ))}
        </tbody>
      </table>
      <ul className={clsx('mt-1 pt-px flex-1 border-t-2 border-[#aaa79b] text-[15px] leading-[20px] text-[#808000]', GRID_TEXT)}>
        <li className="flex items-center pl-[6px]">
          <Expander open />
          <span className="w-2 border-t border-dotted border-[#888]" />
          <svg width="19" height="18" className="shrink-0">
            <path d="M1 1H8L9 3H18V17H1Z" fill="#e3a02e" /><path d="M4 9V6H15V9" fill="#fff3d6" /><path d="M0 9H19L18 17H1Z" fill="#f4bc3c" />
          </svg>
          <span className="ml-[5px] px-[2px] bg-[#0078d7]">11-4换 素水泥浆一道</span>
        </li>
        <li className="flex items-center pl-[23px]">
          <TreeGuide kind="l" className="w-[26px]" />
          <KindBadge letter="C" />
          <span className="ml-2">8001160007 纯水泥浆</span>
        </li>
      </ul>
    </div>
  );
}

function DetailPanel() {
  return (
    <section className="h-[287px] shrink-0 flex flex-col bg-[#f3f3f3] border-b-2 border-[#8ea4b0] pl-[9px] pr-2 pt-[5px] pb-2 text-[15px]">
      <div className="h-[22px] flex gap-[15px]">
        {['人材机明细', '查看单价构成', '统筹工程量', '项目特征', '工作内容、附注'].map((t, i) => (
          <button key={t} className={clsx('w-[122px] h-[22px] leading-[18px] border whitespace-nowrap', i === 0 ? 'bg-[#e1e1e1] border-[#c4c6ca] text-[#666]' : 'bg-white border-[#cdd2da]')}>
            {t}
          </button>
        ))}
      </div>
      <div className="mt-2 flex-1 flex gap-2">
        <DetailTable />
        <FeePanel />
      </div>
    </section>
  );
}

function SheetTabs() {
  return (
    <div className="h-[23px] shrink-0 bg-[#fafafa] flex pl-[11px]">
      <a href="#sheet" className="relative w-[110px] h-[22px] flex items-center justify-center text-[15px]">
        <svg width="110" height="22" className="absolute inset-0">
          <path d="M1 0L7 20H101L107 0" fill="#fff" stroke="#555" />
          <path d="M7 20H101" stroke="#5c6b5c" strokeWidth="3" />
        </svg>
        <span className="relative leading-5 pb-[3px]">P1\分部分项</span>
      </a>
    </div>
  );
}

/* ---------- bottom ---------- */

function StatusBar() {
  return (
    <footer className="h-[26px] shrink-0 flex items-center bg-[#316ac5] text-[#eaf1fb] whitespace-nowrap pt-px">
      <span className="w-[14px] h-[19px] mb-1 bg-[#00ff1e] border-r border-b border-[#333]" />
      <span className="ml-[7px] text-[15px]">费用跟踪</span>
      <span className="ml-4 flex-1 text-[16px]">总造价=3221167 人工费=502372 材料费=1868005 机械费=173372 主材费=0 管理费=111750 利润=54646 直接工程费=2543749</span>
      <span className="w-[375px] text-[15px]">余杭2013清单招标-18定额(一般计税)</span>
      <span className="w-[113px] text-[15px]">清单编制</span>
      <span className="w-[59px] text-[15px]">小</span>
    </footer>
  );
}

function TaskApp({ label, children }: { label: string; children: ReactNode }) {
  return (
    <button aria-label={label} className="w-[51px] h-full pt-[3px] border-b-[3px] border-[#f7d492] flex items-center justify-center">{children}</button>
  );
}

function Taskbar() {
  return (
    <div className="h-[50px] shrink-0 flex items-center bg-[#060a0c] text-white">
      <button aria-label="开始" className="w-[60px] flex justify-center">
        <svg width="20" height="20"><path d="M0 3L9 1.500V9.500H0ZM10 1.400L20 0V9.500H10ZM0 10.500H9V18.500L0 17ZM10 10.500H20V20L10 18.600Z" fill="#fff" /></svg>
      </button>
      <label className="w-[430px] h-full flex items-center bg-[#333] pl-[11px] pr-4">
        <svg width="28" height="28"><circle cx="14" cy="14" r="12" fill="none" stroke="#fff" strokeWidth="3.500" /></svg>
        <input aria-label="搜索" placeholder="在这里输入你要搜索的内容" className="flex-1 min-w-0 ml-[11px] bg-transparent text-[19px] placeholder:text-[#a6a6a6]" />
        <Mic className="w-5 h-5 text-[#c0c0c0]" strokeWidth={1.5} />
      </label>
      <button aria-label="任务视图" className="w-[60px] flex justify-center">
        <svg width="21" height="20" fill="none" stroke="#fff" strokeWidth="1.400"><rect x="1" y="5" width="12" height="10" /><path d="M1 0V3H13V0M1 20V17H13V20M18 0V5M18 11V20" /><rect x="17" y="7" width="2" height="2" fill="#fff" /></svg>
      </button>
      <div className="h-full flex gap-[11px] ml-2">
        <TaskApp label="Chrome">
          <svg width="28" height="28" viewBox="0 0 28 28">
            <circle cx="14" cy="14" r="13.500" fill="#dd4b3e" />
            <path d="M2.300 7.250L8.400 17.250L14 20L13.500 27.500A13.500 13.500 0 0 1 2.300 7.250Z" fill="#1fa15d" />
            <path d="M14 7.700H26A13.500 13.500 0 0 1 13.300 27.500L19.600 17.200Z" fill="#ffcd40" />
            <circle cx="14" cy="14" r="6.300" fill="#f4f4f4" /><circle cx="14" cy="14" r="4.900" fill="#4a8af4" />
          </svg>
        </TaskApp>
        <TaskApp label="擎洲广达"><AppLogo size={30} dark /></TaskApp>
        <TaskApp label="CAD">
          <svg width="30" height="30" viewBox="0 0 30 30">
            <rect x="1" y="1" width="28" height="28" rx="4" fill="#1663ad" stroke="#b9c3cc" strokeWidth="2" />
            <circle cx="15" cy="8" r="2.500" fill="none" stroke="#cfe4f8" />
            <text x="15" y="21" fill="#e6f2fd" fontSize="11" textAnchor="middle" fontFamily="Liberation Sans">CAD</text>
          </svg>
        </TaskApp>
        <TaskApp label="T">
          <svg width="30" height="30" viewBox="0 0 30 30">
            <rect width="30" height="30" rx="5" fill="#2f8ee8" /><rect width="30" height="14" rx="5" fill="#4aa4f4" />
            <path d="M6 6L24 5L25 10H18L18.500 25H12L13 10.500H6Z" fill="#fff" />
          </svg>
        </TaskApp>
      </div>
      <div className="ml-auto h-full flex items-center">
        <svg width="20" height="22" fill="none" stroke="#fff" strokeWidth="1.500"><circle cx="13" cy="4.500" r="3.500" /><circle cx="5" cy="12" r="3" /><path d="M8 13C10 8 16 8 18 14M1 20C2 14 8 14 10 20" /></svg>
        <svg width="16" height="10" className="ml-[26px]"><path d="M1 9L8 1L15 9" fill="none" stroke="#fff" strokeWidth="1.400" /></svg>
        <svg width="21" height="16" className="ml-3"><rect x="5" y="4" width="14" height="10" fill="#fff" stroke="#fff" /><path d="M20 7V11M1 1V5H5V1M3 5V11" fill="none" stroke="#fff" strokeWidth="1.500" /></svg>
        <svg width="18" height="18" className="ml-[11px]" fill="none" stroke="#ddd" strokeWidth="1.500"><path d="M1 17A15 15 0 0 1 16 2M5 17A11 11 0 0 1 16 6M9 17A7 7 0 0 1 16 10" /><circle cx="14.500" cy="15.500" r="1.500" fill="#fff" /></svg>
        <svg width="22" height="18" className="ml-[10px]" fill="none" stroke="#fff" strokeWidth="1.300"><path d="M1 6H5L9 2V16L5 12H1Z" /><path d="M12 6Q14 9 12 12" /><path d="M15 4Q18 9 15 14M18 2Q22 9 18 16" stroke="#888" /></svg>
        <div className="ml-[7px] w-[84px] text-center text-[15px] leading-[23px] [font-family:'Noto_Sans',sans-serif]">
          <p>14:56</p>
          <p>2019/8/23</p>
        </div>
        <button aria-label="通知" className="relative ml-[19px] w-[36px] h-[32px]">
          <svg width="22" height="22"><path d="M0 1H21V17H12L8 21V17H0Z" fill="#fff" /><path d="M4 5.500H17M4 9H17M4 12.500H12" stroke="#111" strokeWidth="1.300" /></svg>
          <span className="absolute left-[10px] top-[11px] w-[20px] h-[20px] rounded-full bg-[#444] border border-[#999] text-[14px] leading-[18px] text-center">1</span>
        </button>
        <span className="h-full w-px ml-[9px] mr-[5px] bg-[#444]" />
      </div>
    </div>
  );
}

const SHEETS = ['工程信息', '费率设置', '分部分项', '技术措施', '工料机汇总', '组织措施', '费用汇总', '报表打印'];

export default function App() {
  return (
    <div className={clsx('h-screen flex flex-col overflow-hidden bg-[#d3dfe6] text-[#111]', UI)}>
      <TitleBar />
      <MenuBar />
      <MainToolbar />
      <main className="flex-1 min-h-0 flex">
        <aside className="w-[297px] shrink-0 flex flex-col">
          <ProjectPanel />
          <div className="h-1 shrink-0" />
          <SectionIndex />
        </aside>
        <div className="flex-1 min-w-0 flex flex-col border-l-2 border-[#9cb8ca]">
          <nav className="h-[33px] shrink-0 flex items-end border-b-2 border-[#75828a] text-[15px] whitespace-nowrap">
            {SHEETS.map((s, i) =>
              i === 2 ? (
                <button key={s} className="ml-1 h-[30px] w-[71px] pb-[2px] border border-b-0 border-[#6d7880] bg-[#dbe5eb]">{s}</button>
              ) : (
                <button key={s} className={clsx('pb-px', i === 3 ? 'pl-2' : 'pl-[9px]')}>
                  <span className={clsx('block leading-6 pr-[2px]', i !== 1 && i !== 7 && 'border-r border-[#6f93ad]')}>{s}</span>
                </button>
              ),
            )}
          </nav>
          <div className="flex-1 min-h-0 flex">
            <LibraryPanel />
            <div className="flex-1 min-w-0 flex flex-col">
              <GridToolbar />
              <CostGrid />
              <DetailPanel />
              <SheetTabs />
            </div>
          </div>
        </div>
      </main>
      <StatusBar />
      <Taskbar />
    </div>
  );
}
